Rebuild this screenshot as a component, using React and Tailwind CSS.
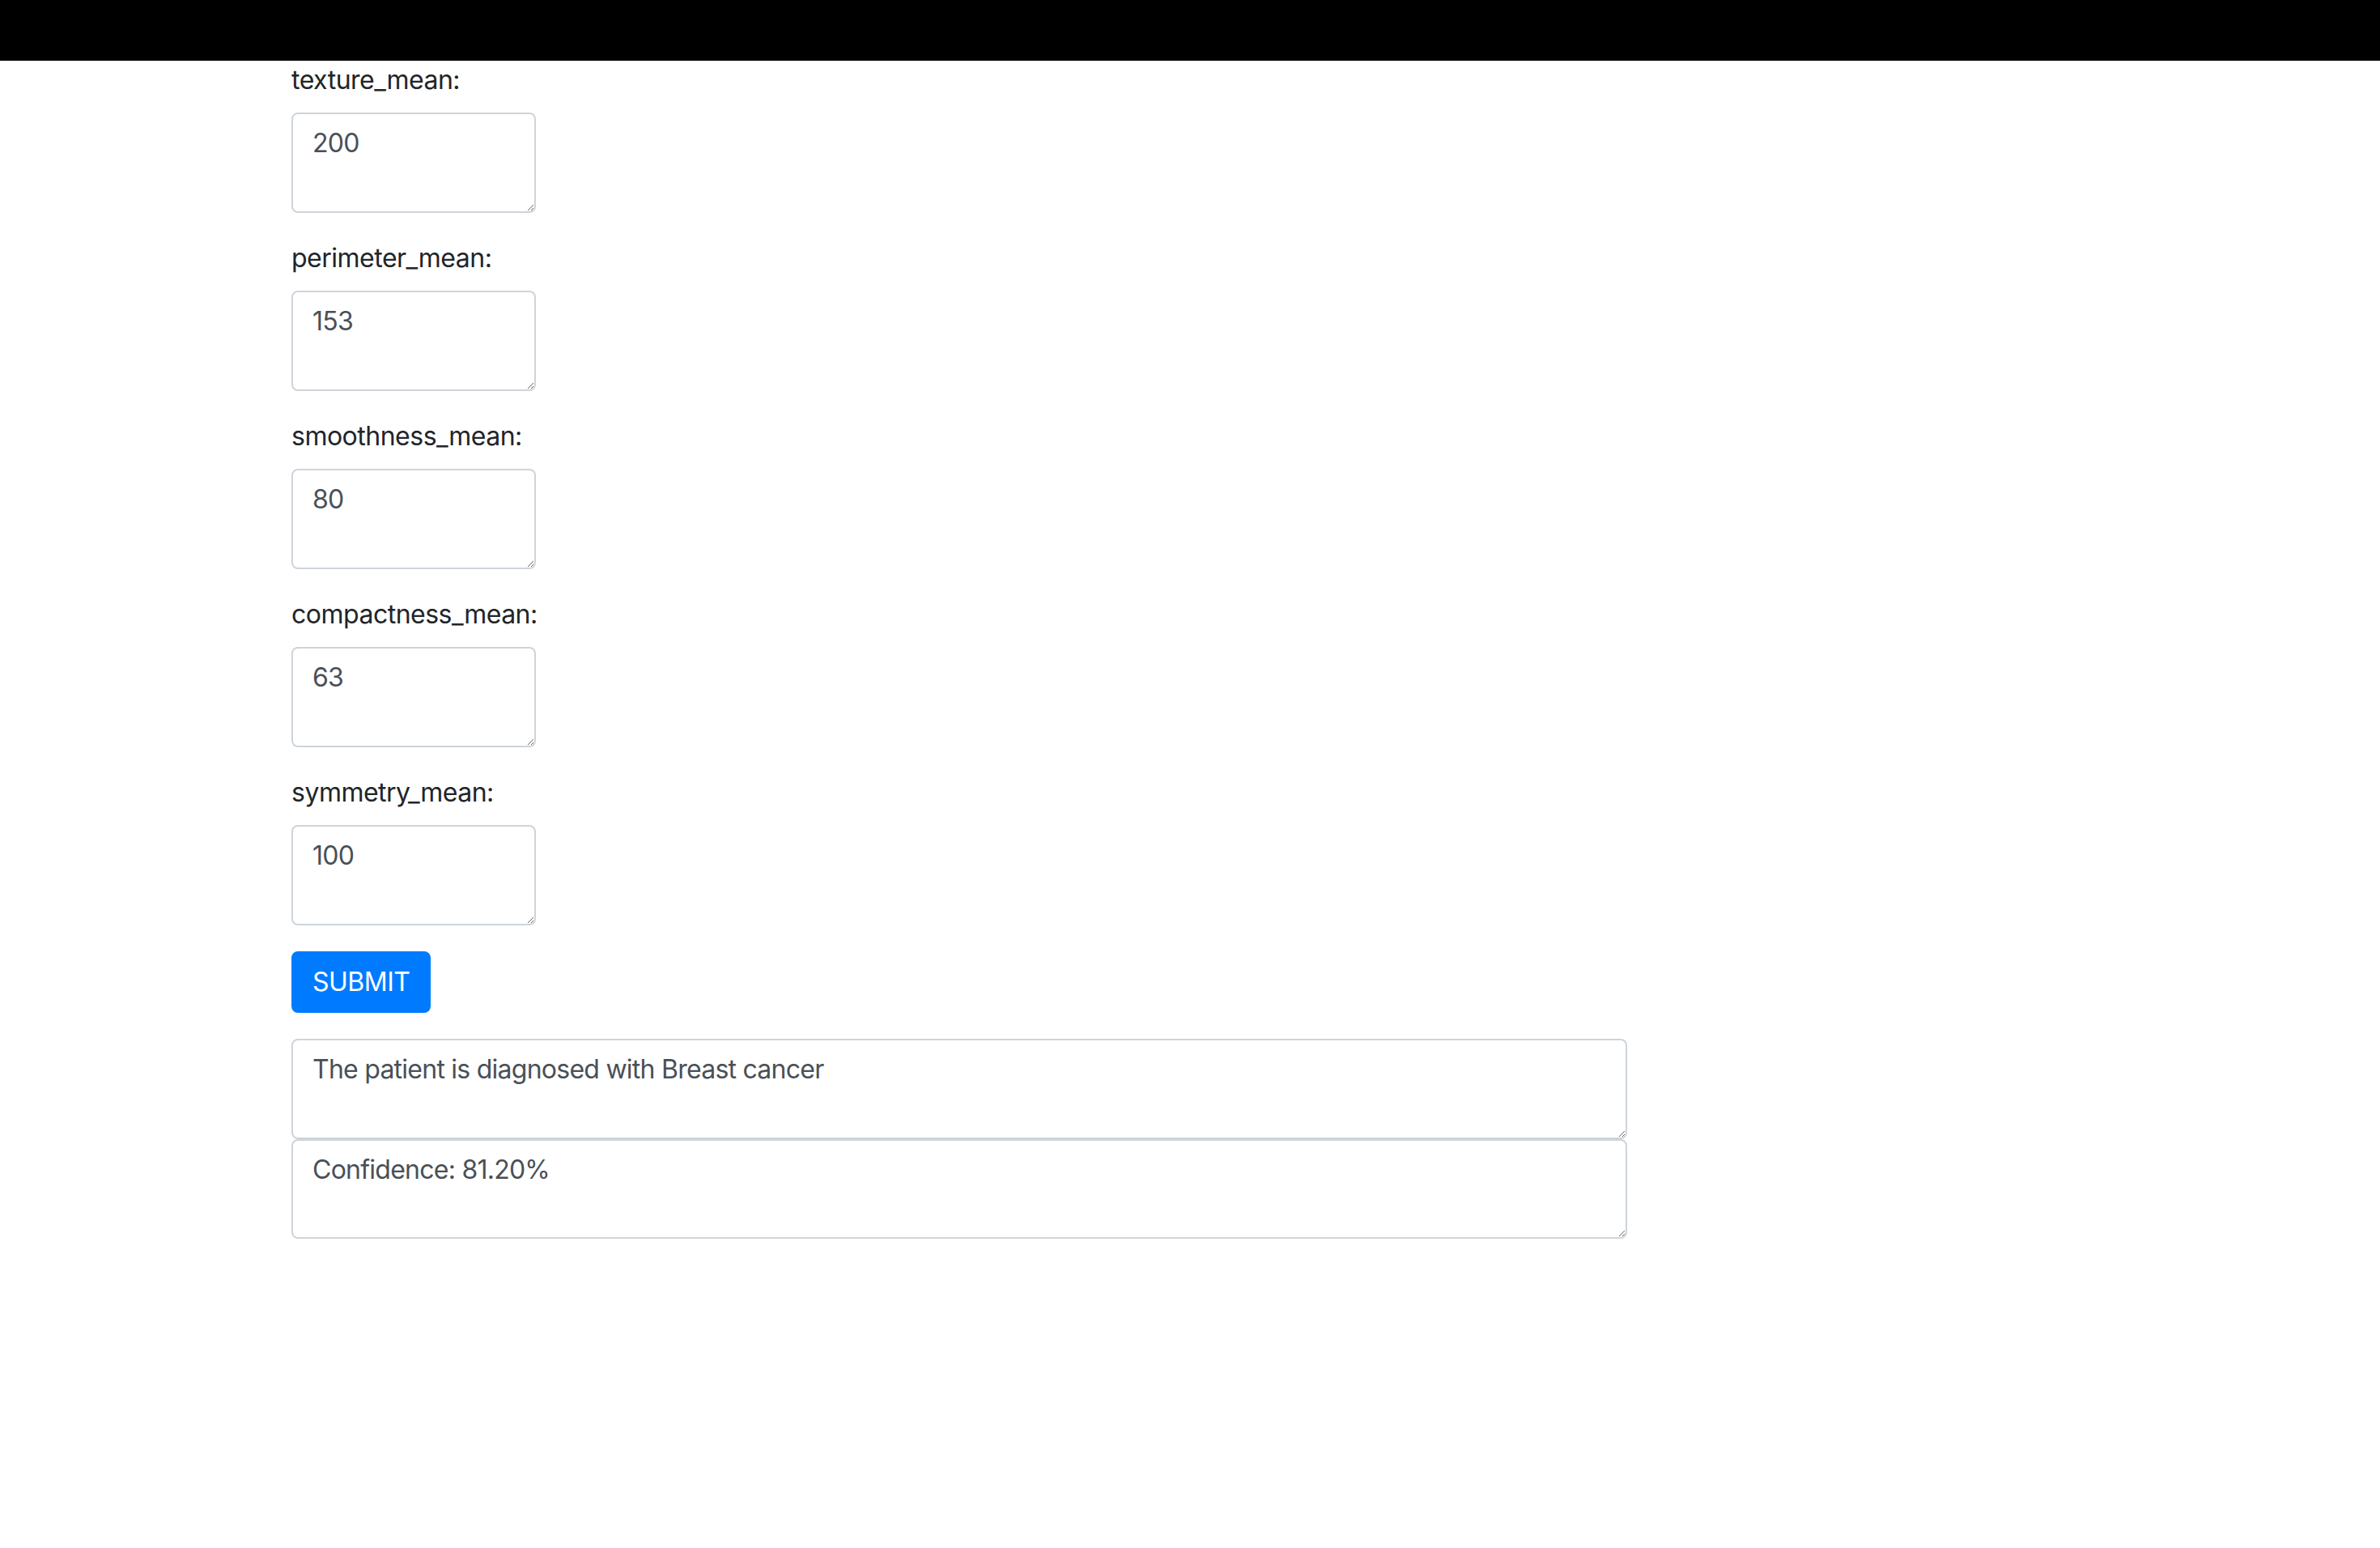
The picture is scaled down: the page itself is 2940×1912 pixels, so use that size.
import React from "react";

const fields = [
  { name: "texture_mean", value: "200" },
  { name: "perimeter_mean", value: "153" },
  { name: "smoothness_mean", value: "80" },
  { name: "compactness_mean", value: "63" },
  { name: "symmetry_mean", value: "100" },
];

const boxClass =
  "block box-border border-2 border-[#ced4da] rounded-[8px] px-[24px] py-[12px] text-[32px] leading-[48px] tracking-[-0.75px] text-[#495057] bg-white outline-none";

const App = () => (
  <div
    className="min-h-[1912px] bg-white text-[#212529]"
    style={{ fontFamily: "Inter, 'Liberation Sans', sans-serif" }}
  >
    <div className="h-[75px] bg-black" />
    <div className="pl-[360px]">
      <form onSubmit={(e) => e.preventDefault()}>
        {fields.map((f) => (
          <div key={f.name} className="mb-[32px]">
            <label className="block mb-[16px] text-[32px] leading-[48px] tracking-[-0.5px]">{f.name}:</label>
            <textarea
              rows={2}
              defaultValue={f.value}
              className={`${boxClass} w-[302px] h-[124px]`}
            />
          </div>
        ))}
        <button
          type="submit"
          className="h-[76px] px-[24px] rounded-[8px] bg-[#007bff] border-2 border-[#007bff] text-white text-[32px] leading-[48px] tracking-[-0.5px]"
        >
          SUBMIT
        </button>
      </form>
      <div className="mt-[32px]">
        <textarea
          rows={2}
          defaultValue="The patient is diagnosed with Breast cancer"
          className={`${boxClass} w-[1650px] h-[124px]`}
        />
        <textarea
          rows={2}
          defaultValue="Confidence: 81.20%"
          className={`${boxClass} w-[1650px] h-[123px]`}
        />
      </div>
    </div>
  </div>
);

export default App;
